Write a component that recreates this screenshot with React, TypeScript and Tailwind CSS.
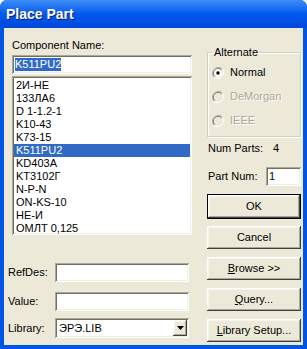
import type { ReactNode } from 'react';

const parts = [
  '2И-НЕ',
  '133ЛА6',
  'D 1-1.2-1',
  'K10-43',
  'K73-15',
  'K511PU2',
  'KD403A',
  'KT3102Г',
  'N-P-N',
  'ON-KS-10',
  'НЕ-И',
  'ОМЛТ 0,125',
];

const sunken =
  'bg-white shadow-[inset_1px_1px_0_#aca899,inset_-1px_-1px_0_#ffffff,inset_2px_2px_0_#716f64,inset_-2px_-2px_0_#f1efe2]';
const raised =
  'bg-[#ece9d8] shadow-[inset_-1px_-1px_0_#404040,inset_1px_1px_0_#ffffff,inset_-2px_-2px_0_#aca899,inset_2px_2px_0_#f6f4ec]';

function Radio({ checked, disabled, label }: { checked?: boolean; disabled?: boolean; label: string }) {
  return (
    <div className="flex h-[13px] items-center gap-[6px]">
      <svg width="12" height="12" viewBox="0 0 12 12" className="shrink-0">
        <path d="M10.6 2.2 A5.5 5.5 0 1 0 2.2 10.6" fill="none" stroke="#aca899" strokeWidth="1" />
        <path d="M9.8 2.9 A4.5 4.5 0 1 0 2.9 9.8" fill="none" stroke="#716f64" strokeWidth="1" />
        <path d="M1.4 9.8 A5.5 5.5 0 0 0 9.8 1.4" fill="none" stroke="#ffffff" strokeWidth="1" />
        <circle cx="6" cy="6" r="4" fill={disabled ? '#ece9d8' : '#ffffff'} />
        {checked && <circle cx="6" cy="6" r="1.7" fill="#000000" />}
      </svg>
      <span
        className={
          disabled ? 'text-[#aca899] [text-shadow:1px_1px_0_#ffffff]' : 'text-black'
        }
      >
        {label}
      </span>
    </div>
  );
}

function Button({ children, isDefault }: { children: ReactNode; isDefault?: boolean }) {
  if (isDefault) {
    return (
      <div className="border border-black">
        <div className={`flex h-[23px] items-center justify-center ${raised}`}>{children}</div>
      </div>
    );
  }
  return <div className={`flex h-[23px] items-center justify-center ${raised}`}>{children}</div>;
}

export default function App() {
  return (
    <div
      className="flex h-[349px] w-[307px] flex-col overflow-hidden rounded-t-[7px] bg-[#0055e5] text-[11px] leading-[13px] text-black"
      style={{ fontFamily: '"Liberation Sans", Arial, sans-serif' }}
    >
      {/* title bar */}
      <div className="flex h-[28px] shrink-0 items-center bg-gradient-to-b from-[#3d8cf7] via-[#0058ee] to-[#0049da] pl-[6px] pb-[1px]">
        <span className="text-[14px] font-bold leading-[16px] text-white [text-shadow:1px_1px_0_#0a1e7a]">
          Place Part
        </span>
      </div>

      {/* client area */}
      <div className="mx-[4px] mb-[4px] flex flex-1 bg-[#ece9d8]">
        {/* left column */}
        <div className="flex w-[191px] flex-col pl-[4px] pt-[11px]">
          <div className="ml-[4px]">Component Name:</div>
          <div className={`ml-[4px] mt-[3px] flex h-[19px] w-[180px] items-center px-[3px] ${sunken}`}>
            <span className="bg-[#316ac5] text-white">K511PU2</span>
          </div>
          <div className={`ml-[4px] mt-[2px] h-[159px] w-[180px] p-[2px] ${sunken}`}>
            <div className="pt-[1px]">
              {parts.map((p) => (
                <div
                  key={p}
                  className={`h-[13px] pl-[2px] ${p === 'K511PU2' ? 'bg-[#316ac5] text-white' : ''}`}
                >
                  {p}
                </div>
              ))}
            </div>
          </div>

          <div className="mt-[28px] flex h-[19px] items-center">
            <span className="w-[47px]">RefDes:</span>
            <div className={`h-[19px] w-[134px] ${sunken}`} />
          </div>
          <div className="mt-[10px] flex h-[19px] items-center">
            <span className="w-[47px]">Value:</span>
            <div className={`h-[19px] w-[134px] ${sunken}`} />
          </div>
          <div className="mt-[7px] flex h-[20px] items-center">
            <span className="w-[47px]">Library:</span>
            <div className={`flex h-[20px] w-[134px] items-center pl-[4px] pr-[2px] ${sunken}`}>
              <span className="flex-1">ЭРЭ.LIB</span>
              <div className={`flex h-[16px] w-[14px] items-center justify-center ${raised}`}>
                <svg width="7" height="4" viewBox="0 0 7 4">
                  <path d="M0 0 H7 L3.5 4 Z" fill="#000000" />
                </svg>
              </div>
            </div>
          </div>
        </div>

        {/* right column */}
        <div className="ml-[12px] flex w-[94px] flex-col pt-[18px]">
          <fieldset className="border border-[#d0d0bf] pb-[9px] pl-[4px] pt-[7px] shadow-[inset_1px_1px_0_#ffffff,1px_1px_0_#ffffff]">
            <legend className="ml-[1px] px-[1px]">Alternate</legend>
            <div className="flex flex-col gap-[11px]">
              <Radio checked label="Normal" />
              <Radio disabled label="DeMorgan" />
              <Radio disabled label="IEEE" />
            </div>
          </fieldset>

          <div className="ml-[1px] mt-[5px] flex h-[13px] items-center">
            <span className="w-[65px]">Num Parts:</span>
            <span>4</span>
          </div>

          <div className="ml-[1px] mt-[12px] flex h-[19px] items-center">
            <span className="w-[58px]">Part Num:</span>
            <div className={`flex h-[19px] w-[35px] items-center px-[3px] ${sunken}`}>1</div>
          </div>

          <div className="mt-[8px] flex flex-col gap-[8px]">
            <div className="-mb-[1px]">
              <Button isDefault>OK</Button>
            </div>
            <Button>Cancel</Button>
            <Button>
              <span>
                <span className="underline">B</span>rowse &gt;&gt;
              </span>
            </Button>
            <Button>
              <span>
                <span className="underline">Q</span>uery...
              </span>
            </Button>
            <Button>
              <span>
                <span className="underline">L</span>ibrary Setup...
              </span>
            </Button>
          </div>
        </div>
      </div>
    </div>
  );
}
